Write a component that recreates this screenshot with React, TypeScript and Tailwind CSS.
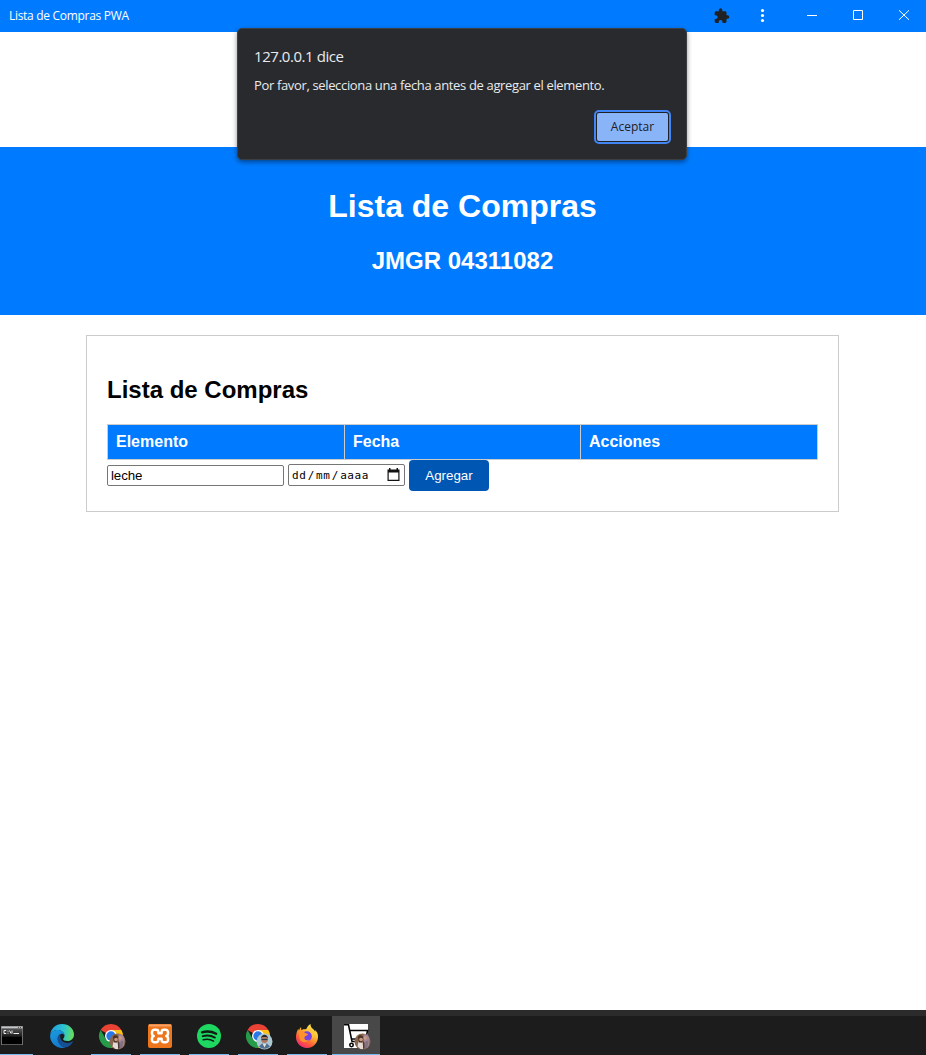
import React from 'react';

const UI = "font-['Open_Sans','Noto_Sans',sans-serif]";

function Puzzle() {
  return (
    <svg width="16" height="16" viewBox="1 1 23 22" fill="#202124">
      <path d="M20.500 11H19V7c0-1.100-.9-2-2-2h-4V3.500a2.500 2.500 0 0 0-5 0V5H4c-1.100 0-1.990.9-1.990 2v3.800H3.500c1.490 0 2.700 1.210 2.700 2.700s-1.210 2.700-2.700 2.700H2V20c0 1.100.9 2 2 2h3.800v-1.500c0-1.490 1.210-2.700 2.700-2.700s2.700 1.210 2.700 2.700V22H17c1.100 0 2-.9 2-2v-4h1.500a2.500 2.500 0 0 0 0-5z" />
    </svg>
  );
}

function TitleBar() {
  return (
    <header className={`flex h-8 items-center bg-[#007bff] pl-[9px] text-white ${UI}`}>
      <span className="whitespace-nowrap text-[12px] leading-4 tracking-[-0.3px]">Lista de Compras PWA</span>
      <div className="ml-auto flex items-center">
        <span className="flex w-[18px] justify-center"><Puzzle /></span>
        <svg className="ml-[27px]" width="8" height="16" viewBox="0 0 8 16" fill="#fff">
          <circle cx="4.500" cy="2.500" r="1.600" /><circle cx="4.500" cy="7.500" r="1.600" /><circle cx="4.500" cy="12.500" r="1.600" />
        </svg>
        <div className="ml-[23px] flex h-8 w-[137px] items-center" aria-hidden="true">
          <svg width="137" height="32" viewBox="789 0 137 32" fill="none" stroke="#fff">
            <path d="M807 15.500h10M853.500 10.500h9v9h-9zM899 10.300l10 9.500M909 10.300l-10 9.500" />
          </svg>
        </div>
      </div>
    </header>
  );
}

function AlertDialog() {
  return (
    <div className={`absolute left-[237px] top-7 h-[132px] w-[450px] rounded-[5px] border border-[#3c4043] bg-[#292a2d] px-4 text-[#e8eaed] shadow-[0_2px_5px_rgba(0,0,0,0.45)] ${UI}`}>
      <h3 className="mt-[17px] whitespace-nowrap text-[15px] leading-5 tracking-[-0.45px]">127.0.0.1 dice</h3>
      <p className="mt-[9px] whitespace-nowrap text-[13px] leading-5 tracking-[-0.35px]">Por favor, selecciona una fecha antes de agregar el elemento.</p>
      <div className="-mr-[1px] mt-[15px] flex justify-end">
        <div className="h-[34px] w-[77px] rounded-[5px] border-2 border-[#4285f4] bg-[#202124] p-px">
          <button className="h-full w-full rounded-[2px] bg-[#8ab4f8] text-[12px] font-medium text-[#202124]">Aceptar</button>
        </div>
      </div>
    </div>
  );
}

function Hero() {
  return (
    <section className="mt-[115px] h-[168px] bg-[#007bff] pr-px pt-[41px] text-center font-bold text-white">
      <h1 className="text-[32px] leading-[37px]">Lista de Compras</h1>
      <h2 className="mt-[22px] text-[24px] leading-[27px]">JMGR 04311082</h2>
    </section>
  );
}

function ShoppingCard() {
  return (
    <main className="ml-[86px] mt-5 h-[177px] w-[753px] border border-[#ccc] px-5 pt-10">
      <h2 className="text-[24px] font-bold leading-[28px]">Lista de Compras</h2>
      <div className="mt-5 grid h-9 w-[711px] grid-cols-[237px_236px_1fr] border border-[#ccc] bg-[#007bff] text-[16px] font-bold leading-[33px] text-white">
        <div className="border-r border-[#ccc] pl-2">Elemento</div>
        <div className="border-r border-[#ccc] pl-2">Fecha</div>
        <div className="pl-2">Acciones</div>
      </div>
      <div className="flex items-start">
        <div className="mt-[5px] h-[21px] w-[177px] rounded-[2px] border border-[#767676] pl-[3px] text-[13.333px] leading-[19px] tracking-[-0.1px]">leche</div>
        <div className="ml-1 mt-1 flex h-[22px] w-[117px] items-center rounded-[2px] border border-[#767676] pl-[3px] pr-1">
          <span className="whitespace-nowrap pt-[2px] font-['DejaVu_Sans_Mono',monospace] text-[11px] leading-5 tracking-[0.6px]">dd<span className="mx-[1.2px]">/</span>mm<span className="mx-[1.2px]">/</span>aaaa</span>
          <svg className="ml-auto shrink-0" width="13" height="14" viewBox="0 0 13 14">
            <path fill="#111" fillRule="evenodd" d="M2 0h1.500v1.500h6V0H11v1.500h1.500V13h-12V1.500H2zM1.700 4.500v7.300h9.600V4.500z" />
          </svg>
        </div>
        <button className="ml-1 h-[31px] w-20 rounded-[4px] bg-[#0056b3] text-[13.333px] text-white">Agregar</button>
      </div>
    </main>
  );
}

function Terminal() {
  return (
    <svg width="24" height="24" viewBox="0 0 24 24">
      <defs><linearGradient id="screen" x1="0" y1="0" x2="0" y2="1"><stop stopColor="#555" /><stop offset=".5" stopColor="#1c1c1c" /><stop offset=".55" stopColor="#000" /></linearGradient></defs>
      <path d="M1 2h22v19H1z" fill="#707070" /><path d="M1.500 2.500h21v2h-21z" fill="#c4c8cb" />
      <path d="M2 4.500h20v15.700H2z" fill="url(#screen)" />
      <path d="M6.200 6.500H4v3h2.200M8 6.800v.9M8 8.800v.9M9.500 6.500l1.500 3M12 6.500v3M13.500 9.500h5.500" stroke="#eee" fill="none" />
      <path d="M18 3.500h1M20 3.500h1" stroke="#555" />
    </svg>
  );
}

function Edge() {
  return (
    <svg width="24" height="24" viewBox="0 0 24 24">
      <defs>
        <linearGradient id="edgeTop" x1="0" y1=".4" x2="1" y2=".5"><stop stopColor="#239ce0" /><stop offset=".55" stopColor="#2bc3d2" /><stop offset="1" stopColor="#68df57" /></linearGradient>
        <linearGradient id="edgeBase" x1="0" y1="0" x2=".5" y2="1"><stop stopColor="#1b9de2" /><stop offset="1" stopColor="#1479cc" /></linearGradient>
      </defs>
      <path fill="url(#edgeTop)" d="M.1 11C.8 4.500 5.800 0 12 0c7 0 12 5 12 10.500 0 4-3 6.500-6.200 6.500-3.300 0-4.700-1-4.700-2 0-.7 1.400-1.200 1.400-3.300C14.500 8.500 11.500 6 7.500 6 3.500 6 1 8.500.1 11z" />
      <path fill="url(#edgeBase)" d="M.1 12C.5 8.300 3.700 6 7.500 6c4 0 7 2.500 7 5.300-.6-1.200-1.600-1.900-3.100-1.600-3 .7-4.500 4-3.200 7.500 1.300 3.600 4.300 5.700 7.300 6.200A12 12 0 0 1 .1 12z" />
      <path fill="#154f94" d="M8.200 17.200C7 14 8 11.100 10.500 9.900c-1.600 5 2.400 9 7 9 2.300 0 3.700-1.100 4.600-1.500.6-.2.900.3.600.8-1.600 2.600-4.200 5.500-9.300 5.100-2.500-.9-4.400-3.300-5.200-6.100z" />
    </svg>
  );
}

function Avatar({ pair }: { pair: boolean }) {
  return (
    <g transform="translate(10.500 9.500)">
      {pair ? (
        <>
          <circle cx="8" cy="8" r="8" fill="#87664e" />
          <path d="M9 1c4-1 6 2 6 6l-1 6-4 2z" fill="#a58798" />
          <path d="M3 13l1-5 4 1 1 6.500H6z" fill="#e5d9d5" /><path d="M3.500 4c0-3 5-3 5 0l-1 5h-3z" fill="#4b3027" />
          <circle cx="6.500" cy="6" r="1.800" fill="#c99882" /><circle cx="10.700" cy="4.500" r="1.700" fill="#c99b83" />
          <path d="M11 8l3-1-1 7-3 1z" fill="#827080" /><path d="M8.500 8l1.500 1v5l-1.500 2z" fill="#4b3936" />
        </>
      ) : (
        <>
          <circle cx="8" cy="8" r="8" fill="#adc8d2" />
          <path d="M2.500 13l3-3h5l3 3A8 8 0 0 1 2.500 13z" fill="#546f8e" /><path d="M6 10h4l-2 4z" fill="#e0e4ea" />
          <circle cx="8" cy="6" r="3.400" fill="#ad7963" /><path d="M4.600 5c0-5 6.800-5 6.800 0L10 3.500H6z" fill="#292829" />
          <path d="M5 6h6" stroke="#263b49" strokeWidth="1.200" />
        </>
      )}
    </g>
  );
}

function Chrome({ pair }: { pair: boolean }) {
  return (
    <svg className="overflow-visible" width="24" height="24" viewBox="0 0 24 24">
      <path fill="#ea4335" d="M12 12L1.600 6A12 12 0 0 1 22.400 6z" />
      <path fill="#fbc116" d="M12 12V6h10.400A12 12 0 0 1 12 24l5.200-9z" />
      <path fill="#269b49" d="M1.600 6l5.200 9L12 18l5.200-3L12 24A12 12 0 0 1 1.600 6z" />
      <circle cx="12" cy="12" r="6" fill="#fff" /><circle cx="12" cy="12" r="4.700" fill="#2878e8" />
      <Avatar pair={pair} />
    </svg>
  );
}

function Xampp() {
  return (
    <svg width="24" height="24" viewBox="0 0 24 24">
      <rect width="24" height="24" rx="2" fill="#ed751c" /><path d="M1 .5h22v2H1z" fill="#f5a269" />
      <path d="M12 9.300h1.600V8a2.400 2.400 0 0 1 2.400-2.300h1.500A2.400 2.400 0 0 1 20 8v1.700c0 1.200-.7 1.900-1.700 2.300 1 .4 1.700 1.100 1.700 2.300V16a2.400 2.400 0 0 1-2.500 2.300H16a2.400 2.400 0 0 1-2.400-2.300v-1.300h-3.200V16A2.400 2.400 0 0 1 8 18.300H6.500A2.400 2.400 0 0 1 4 16v-1.700c0-1.200.7-1.900 1.700-2.300C4.700 11.600 4 10.900 4 9.700V8a2.400 2.400 0 0 1 2.500-2.300H8A2.400 2.400 0 0 1 10.400 8v1.300z" fill="#ed751c" stroke="#fff" strokeWidth="2.500" strokeLinejoin="round" />
    </svg>
  );
}

function Spotify() {
  return (
    <svg width="24" height="24" viewBox="0 0 24 24">
      <circle cx="12" cy="12" r="12" fill="#1ed760" />
      <g fill="none" stroke="#101b14" strokeLinecap="round"><path d="M5 8.300c5-1.400 10-.8 14.200 1.500" strokeWidth="2.300" /><path d="M5.700 12.200c4.300-1.200 8.600-.7 12.200 1.400" strokeWidth="1.900" /><path d="M6.200 15.800c3.700-.8 7.400-.5 10.400 1.300" strokeWidth="1.500" /></g>
    </svg>
  );
}

function Firefox() {
  return (
    <svg width="24" height="24" viewBox="0 0 24 24">
      <defs><linearGradient id="fox" x1=".8" y1=".1" x2=".25" y2="1"><stop stopColor="#fff050" /><stop offset=".35" stopColor="#ffb52e" /><stop offset=".7" stopColor="#ff5b38" /><stop offset="1" stopColor="#ed247e" /></linearGradient></defs>
      <path fill="url(#fox)" d="M15.500 0c-.2 2.600 1 3.600 2.500 5 1.300 1.100 1.800 2 2.200 3V6c2.100 2.100 3 4.500 2.800 7A11.200 11.200 0 0 1 11.900 24C5.600 24 1 19 1 13.100 1 9.500 2 7 3.300 4.700L4 7c.3-2 1.200-3.100 2.100-4v3C8 5 9 5 10.500 5.300 12.500 4.500 12 2 15.500 0z" />
      <circle cx="11.800" cy="12.200" r="5" fill="#7542e5" />
      <path fill="#ff922b" d="M4 7c2.500-1 4.500-.3 6 2 1 .6 3 .2 3 1.200-.5 1.600-3 1.300-3.500 3C8.800 16 12 17 14 15.600c-2 4-8 3.500-9.400-.8C3.800 12 4.500 9 4 7z" />
      <path fill="#ffc53b" d="M15.500 0c-.7 5-3.300 5-3 6.500 4 .2 6 4 4.500 8 2.500-2 2.500-5.500 1-7.500-1.500-2.200-4-3-2.500-7z" />
    </svg>
  );
}

function Cart() {
  return (
    <svg className="overflow-visible" width="24" height="24" viewBox="0 0 24 24">
      <path fill="#fff" d="M0 0h24v24H0z" />
      <g fill="none" stroke="#080808" strokeWidth="1.600"><path d="M0 .8h4.500L8 17.500h11M5 6.500h18.500L22 15H7.500" /><circle cx="7.500" cy="21" r="1.700" /></g>
      <Avatar pair />
    </svg>
  );
}

const apps = [
  { icon: <Edge />, running: false },
  { icon: <Chrome pair />, running: true },
  { icon: <Xampp />, running: true },
  { icon: <Spotify />, running: true },
  { icon: <Chrome pair={false} />, running: true },
  { icon: <Firefox />, running: true },
];

function Taskbar() {
  return (
    <footer className="mt-auto h-[45px] border-t-[6px] border-[#2b2b2b] bg-[#1c1c1c]">
      <div className="flex h-full gap-px">
        <div className="flex w-[37px] flex-col justify-between pt-2"><Terminal /><span className="h-px w-[33px] bg-[#76b9ed]" /></div>
        {apps.map((app, i) => (
          <div key={i} className="flex w-12 flex-col items-center justify-between pt-2">
            {app.icon}<span className={app.running ? 'h-px w-10 bg-[#76b9ed]' : 'h-px w-10'} />
          </div>
        ))}
        <div className="flex w-12 flex-col items-center justify-between bg-[#484848] pt-2"><Cart /><span className="h-px w-12 bg-[#76b9ed]" /></div>
      </div>
    </footer>
  );
}

export default function App() {
  return (
    <div className="relative flex h-[1055px] w-[926px] flex-col overflow-hidden bg-white font-['Liberation_Sans',Arial,sans-serif] text-black">
      <TitleBar />
      <Hero />
      <ShoppingCard />
      <Taskbar />
      <AlertDialog />
    </div>
  );
}
